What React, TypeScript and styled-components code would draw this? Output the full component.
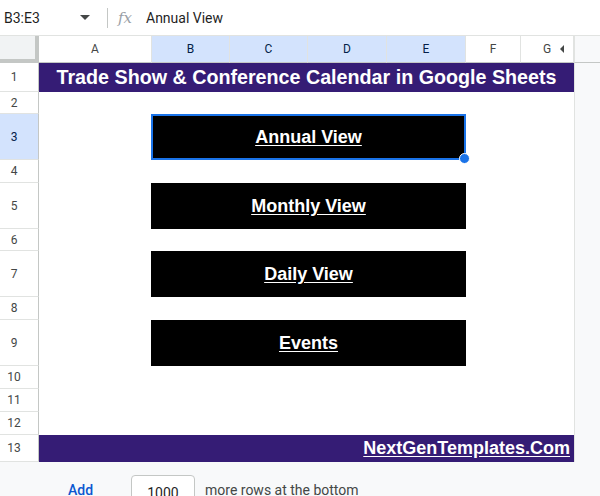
import React from 'react';
import styled, { createGlobalStyle } from 'styled-components';

const Global = createGlobalStyle`
  html, body { margin: 0; padding: 0; background: #fff; overflow: hidden; }
  body { width: 600px; height: 496px; font-family: Roboto, "Liberation Sans", Arial, sans-serif; }
  * { box-sizing: border-box; }
`;

const Page = styled.div`
  width: 600px;
  height: 496px;
  display: flex;
  flex-direction: column;
  overflow: hidden;
`;

const FormulaBar = styled.div`
  height: 36px;
  flex: none;
  display: flex;
  align-items: center;
  background: #fff;
  border-bottom: 1px solid #e1e3e1;
`;

const NameBox = styled.div`
  width: 100px;
  display: flex;
  align-items: center;
  justify-content: space-between;
  padding: 0 10px 0 4px;
  font-size: 14px;
  color: #1f1f1f;
`;

const Caret = styled.span`
  width: 0;
  height: 0;
  border-left: 5px solid transparent;
  border-right: 5px solid transparent;
  border-top: 5px solid #444746;
`;

const Divider = styled.span`
  width: 1px;
  height: 20px;
  background: #c4c7c5;
  margin: 0 10px 0 7px;
`;

const Fx = styled.span`
  font-family: "DejaVu Serif", "Liberation Serif", serif;
  font-style: italic;
  font-size: 15px;
  color: #9aa0a6;
  width: 28px;
`;

const FormulaText = styled.span`
  font-size: 14px;
  color: #1f1f1f;
`;

const Sheet = styled.div`
  display: grid;
  grid-template-columns: 39px 113px 78px 78px 79px 79px 55px 53px 26px;
  grid-template-rows: 27px 29px 22px 46px 23px 46px 22px 46px 23px 46px 23px 23px 23px 27px;
  flex: none;
`;

const Corner = styled.div`
  background: #f1f3f4;
  border-right: 4px solid #c4c7c5;
  border-bottom: 4px solid #c4c7c5;
`;

const ColHead = styled.div<{ $sel?: boolean }>`
  display: flex;
  align-items: center;
  justify-content: center;
  font-size: 12px;
  color: ${p => (p.$sel ? '#041e49' : '#444746')};
  background: ${p => (p.$sel ? '#d3e3fd' : '#fff')};
  border-right: 1px solid #e1e3e1;
  border-bottom: 1px solid #c4c7c5;
  position: relative;
`;

const ScrollArrow = styled.span`
  position: absolute;
  right: 9px;
  top: 50%;
  margin-top: -4px;
  width: 0;
  height: 0;
  border-top: 4px solid transparent;
  border-bottom: 4px solid transparent;
  border-right: 4px solid #444746;
`;

const RowHead = styled.div<{ $sel?: boolean }>`
  display: flex;
  align-items: center;
  padding-left: 2px;
  font-size: 12px;
  color: ${p => (p.$sel ? '#041e49' : '#444746')};
  background: ${p => (p.$sel ? '#d3e3fd' : '#fff')};
  border-right: 1px solid #c4c7c5;
  border-bottom: 1px solid #e1e3e1;
`;

const RowNum = styled.span`
  width: 24px;
  text-align: center;
`;

const Blank = styled.div<{ $span: number }>`
  grid-column: span ${p => p.$span};
  background: #fff;
`;

const Filler = styled.div<{ $top?: boolean }>`
  background: #f8f9fa;
  border-left: 1px solid #e1e3e1;
  border-bottom: ${p => (p.$top ? '1px solid #c4c7c5' : 'none')};
`;

const Banner = styled.div<{ $align: 'center' | 'flex-end'; $size: number }>`
  grid-column: span 7;
  background: #351c75;
  color: #fff;
  font-family: "Liberation Sans", Arial, sans-serif;
  font-weight: bold;
  font-size: ${p => p.$size}px;
  display: flex;
  align-items: center;
  justify-content: ${p => p.$align};
  padding: 0 4px;
  white-space: nowrap;
`;

const LinkText = styled.span<{ $plain?: boolean }>`
  text-decoration: ${p => (p.$plain ? 'none' : 'underline')};
  text-underline-offset: 2px;
`;

const NavButton = styled.div<{ $selected?: boolean }>`
  grid-column: span 4;
  position: relative;
  background: #000;
  color: #fff;
  font-family: "Liberation Sans", Arial, sans-serif;
  font-weight: bold;
  font-size: 18px;
  display: flex;
  align-items: center;
  justify-content: center;
  margin-left: -1px;
  border: ${p => (p.$selected ? '2px solid #1a73e8' : 'none')};
`;

const Handle = styled.span`
  position: absolute;
  right: -6px;
  bottom: -6px;
  width: 9px;
  height: 9px;
  border-radius: 50%;
  background: #1a73e8;
  border: 1px solid #fff;
  box-sizing: content-box;
`;

const Footer = styled.div`
  flex: 1;
  background: #f8f9fa;
  display: flex;
  align-items: flex-start;
  padding: 13px 0 0 68px;
  font-size: 14px;
  color: #444746;
`;

const AddButton = styled.span`
  color: #0b57d0;
  font-weight: 500;
  margin-top: 7px;
  width: 63px;
`;

const CountBox = styled.div`
  width: 64px;
  height: 30px;
  border: 1px solid #c4c7c5;
  border-radius: 4px;
  background: #fff;
  display: flex;
  align-items: center;
  justify-content: center;
  color: #1f1f1f;
  font-size: 14px;
  padding-top: 6px;
  margin-right: 10px;
`;

const MoreText = styled.span`
  margin-top: 7px;
`;

type Row =
  | { kind: 'banner'; text: string; align: 'center' | 'flex-end'; size: number }
  | { kind: 'blank' }
  | { kind: 'button'; text: string; selected?: boolean };

const rows: Row[] = [
  { kind: 'banner', text: 'Trade Show & Conference Calendar in Google Sheets', align: 'center', size: 19.7 },
  { kind: 'blank' },
  { kind: 'button', text: 'Annual View', selected: true },
  { kind: 'blank' },
  { kind: 'button', text: 'Monthly View' },
  { kind: 'blank' },
  { kind: 'button', text: 'Daily View' },
  { kind: 'blank' },
  { kind: 'button', text: 'Events' },
  { kind: 'blank' },
  { kind: 'blank' },
  { kind: 'blank' },
  { kind: 'banner', text: 'NextGenTemplates.Com', align: 'flex-end', size: 18 },
];

const columns = ['A', 'B', 'C', 'D', 'E', 'F', 'G'];
const selectedCols = new Set(['B', 'C', 'D', 'E']);

export default function App() {
  return (
    <Page>
      <Global />
      <FormulaBar>
        <NameBox>
          <span>B3:E3</span>
          <Caret />
        </NameBox>
        <Divider />
        <Fx>fx</Fx>
        <FormulaText>Annual View</FormulaText>
      </FormulaBar>
      <Sheet>
        <Corner />
        {columns.map(c => (
          <ColHead key={c} $sel={selectedCols.has(c)}>
            {c}
            {c === 'G' && <ScrollArrow />}
          </ColHead>
        ))}
        <Filler $top />
        {rows.map((r, i) => {
          const n = i + 1;
          return (
            <React.Fragment key={n}>
              <RowHead $sel={n === 3}>
                <RowNum>{n}</RowNum>
              </RowHead>
              {r.kind === 'banner' && (
                <Banner $align={r.align} $size={r.size}>
                  <LinkText $plain={r.align === 'center'}>{r.text}</LinkText>
                </Banner>
              )}
              {r.kind === 'blank' && <Blank $span={7} />}
              {r.kind === 'button' && (
                <>
                  <Blank $span={1} />
                  <NavButton $selected={r.selected}>
                    <LinkText>{r.text}</LinkText>
                    {r.selected && <Handle />}
                  </NavButton>
                  <Blank $span={2} />
                </>
              )}
              <Filler />
            </React.Fragment>
          );
        })}
      </Sheet>
      <Footer>
        <AddButton>Add</AddButton>
        <CountBox>1000</CountBox>
        <MoreText>more rows at the bottom</MoreText>
      </Footer>
    </Page>
  );
}
